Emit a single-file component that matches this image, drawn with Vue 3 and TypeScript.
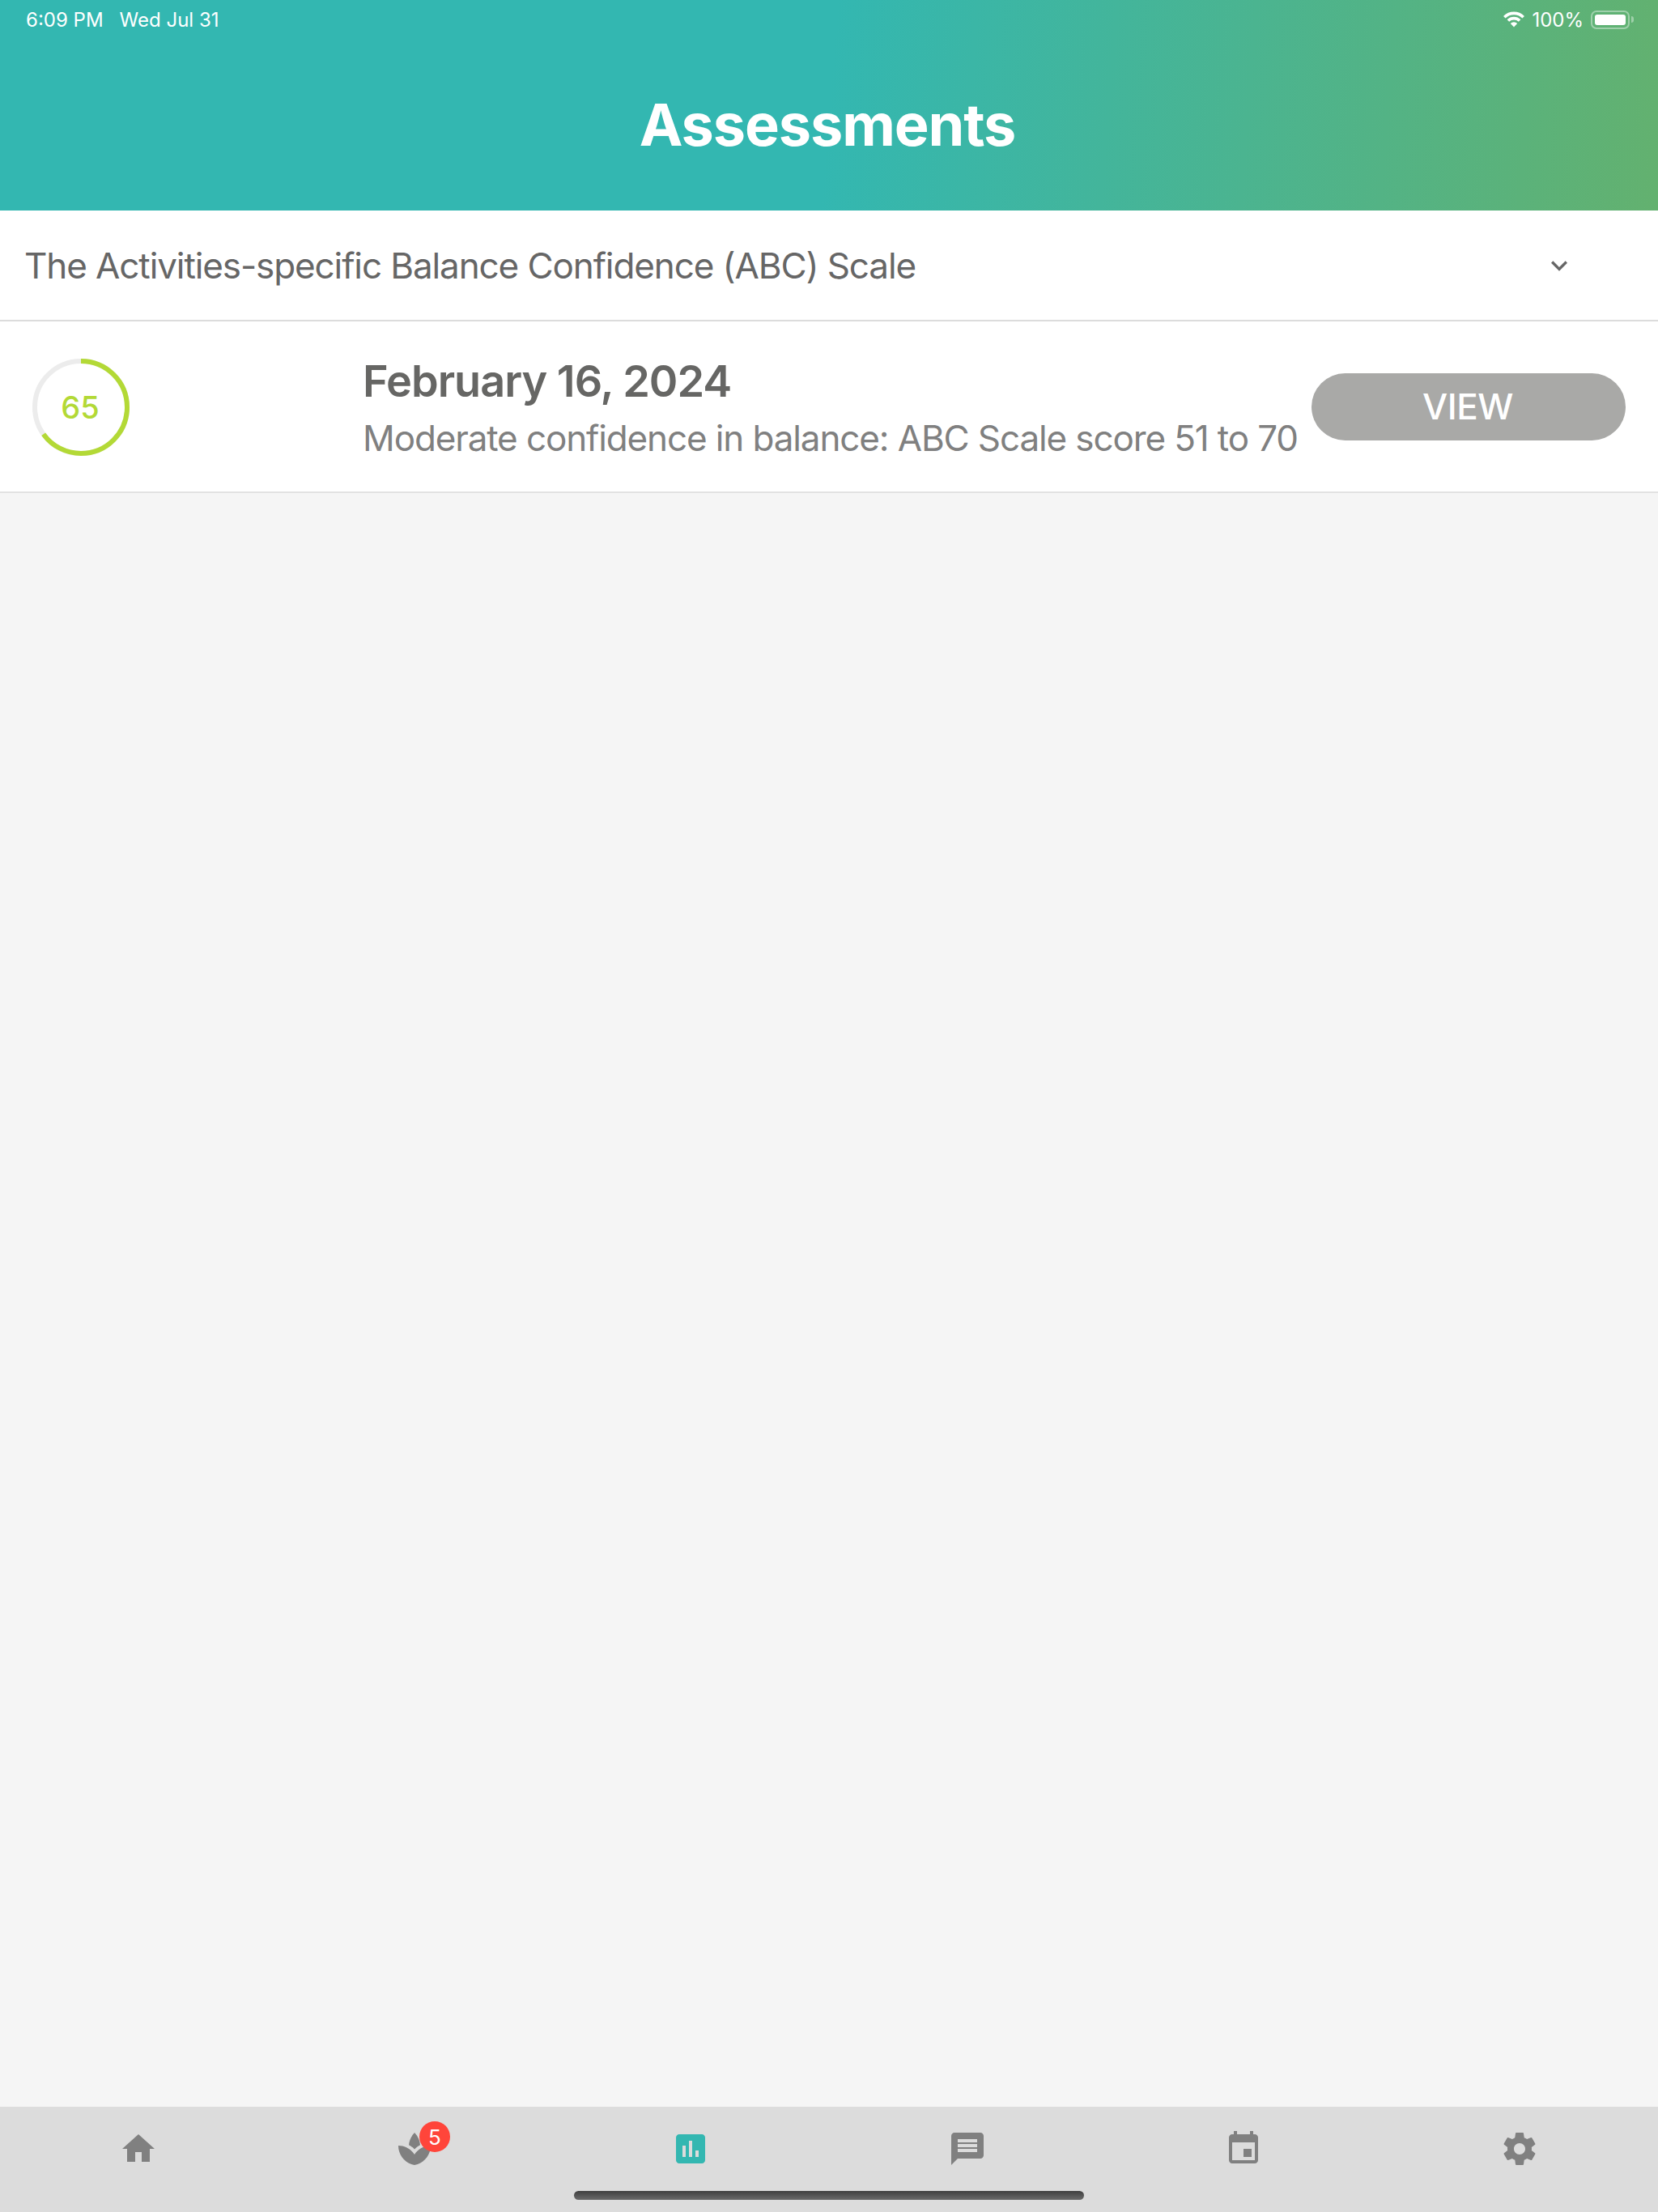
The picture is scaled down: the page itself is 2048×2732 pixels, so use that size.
<template>
  <div class="page">
    <header class="header">
      <div class="status">
        <div class="status-left">
          <span>6:09 PM</span>
          <span>Wed Jul 31</span>
        </div>
        <div class="status-right">
          <svg class="wifi" viewBox="0 0 28 20" width="28" height="20">
            <path class="wifi-arc" d="M2.300 7.200A16.500 16.500 0 0 1 25.700 7.200" />
            <path class="wifi-arc" d="M6.900 11.600A10 10 0 0 1 21.100 11.600" />
            <path fill="#fff" d="M14 19.500L9.800 15a6 6 0 0 1 8.400 0z" />
          </svg>
          <span>100%</span>
          <div class="battery"><div class="battery-fill"></div></div>
          <div class="battery-nub"></div>
        </div>
      </div>
      <h1 class="title">Assessments</h1>
    </header>

    <div class="picker">
      <span class="picker-label">The Activities-specific Balance Confidence (ABC) Scale</span>
      <svg class="chevron" viewBox="0 0 24 24" width="40" height="40">
        <path fill="#666" d="M16.590 8.590L12 13.170 7.410 8.590 6 10l6 6 6-6z" />
      </svg>
    </div>

    <main class="content">
      <div class="result">
        <div class="score">
          <svg viewBox="0 0 120 120" width="120" height="120">
            <circle class="ring-track" cx="60" cy="60" :r="radius" />
            <circle
              class="ring-value"
              cx="60"
              cy="60"
              :r="radius"
              :stroke-dasharray="dash"
              transform="rotate(-90 60 60)"
            />
          </svg>
          <span class="score-num">{{ score }}</span>
        </div>
        <div class="result-text">
          <div class="result-date">February 16, 2024</div>
          <div class="result-desc">Moderate confidence in balance: ABC Scale score 51 to 70</div>
        </div>
        <button class="view-btn">VIEW</button>
      </div>
    </main>

    <footer class="tabbar">
      <div class="tabs">
        <div v-for="tab in tabs" :key="tab.name" class="tab">
          <div class="tab-icon">
            <svg viewBox="0 0 24 24" width="48" height="48">
              <path :fill="tab.active ? '#33b7b1' : '#808080'" :d="tab.path" />
            </svg>
            <span v-if="tab.badge" class="badge">{{ tab.badge }}</span>
          </div>
        </div>
      </div>
      <div class="home-bar"></div>
    </footer>
  </div>
</template>

<script setup lang="ts">
import { computed } from "vue";

interface Tab {
  name: string;
  path: string;
  active?: boolean;
  badge?: number;
}

const score = 65;
const radius = 57;
const dash = computed(() => {
  const full = 2 * Math.PI * radius;
  return `${(full * score) / 100} ${full}`;
});

const tabs: Tab[] = [
  { name: "home", path: "M10 20v-6h4v6h5v-8h3L12 3 2 12h3v8z" },
  {
    name: "spa",
    badge: 5,
    path: "M15.490 9.630c-.18-2.790-1.310-5.510-3.430-7.630-2.140 2.140-3.320 4.860-3.550 7.630 1.280.68 2.460 1.560 3.490 2.630 1.030-1.060 2.210-1.940 3.490-2.630zM12 15.450C9.850 12.170 6.180 10 2 10c0 5.320 3.360 9.820 8.030 11.490.63.23 1.290.4 1.970.51.68-.12 1.330-.29 1.970-.51C18.640 19.820 22 15.320 22 10c-4.180 0-7.850 2.170-10 5.450z",
  },
  {
    name: "assessment",
    active: true,
    path: "M19 3H5c-1.100 0-2 .9-2 2v14c0 1.100.9 2 2 2h14c1.100 0 2-.9 2-2V5c0-1.100-.9-2-2-2zM9 17H7v-7h2v7zm4 0h-2V7h2v10zm4 0h-2v-4h2v4z",
  },
  {
    name: "message",
    path: "M20 2H4c-1.100 0-1.990.9-1.990 2L2 22l4-4h14c1.100 0 2-.9 2-2V4c0-1.100-.9-2-2-2zm-2 12H6v-2h12v2zm0-3H6V9h12v2zm0-3H6V6h12v2z",
  },
  {
    name: "event",
    path: "M17 12h-5v5h5v-5zM16 1v2H8V1H6v2H5c-1.110 0-1.990.9-1.990 2L3 19c0 1.100.89 2 2 2h14c1.100 0 2-.9 2-2V5c0-1.100-.9-2-2-2h-1V1h-2zm3 18H5V8h14v11z",
  },
  {
    name: "settings",
    path: "M19.430 12.980c.04-.32.07-.64.07-.98s-.03-.66-.07-.98l2.110-1.650c.19-.15.24-.42.12-.64l-2-3.460c-.12-.22-.39-.3-.61-.22l-2.490 1c-.52-.4-1.080-.73-1.690-.98l-.38-2.650C14.460 2.180 14.250 2 14 2h-4c-.25 0-.46.18-.49.42l-.38 2.650c-.61.25-1.170.59-1.690.98l-2.490-1c-.23-.09-.49 0-.61.22l-2 3.460c-.13.22-.07.49.12.64l2.110 1.650c-.04.32-.07.65-.07.98s.03.66.07.98l-2.110 1.650c-.19.15-.24.42-.12.64l2 3.460c.12.22.39.3.61.22l2.490-1c.52.4 1.080.73 1.690.98l.38 2.650c.03.24.24.42.49.42h4c.25 0 .46-.18.49-.42l.38-2.650c.61-.25 1.170-.59 1.690-.98l2.490 1c.23.09.49 0 .61-.22l2-3.460c.12-.22.07-.49-.12-.64l-2.110-1.650zM12 15.500c-1.930 0-3.500-1.570-3.500-3.500s1.570-3.500 3.500-3.500 3.500 1.570 3.500 3.500-1.570 3.500-3.500 3.500z",
  },
];
</script>

<style scoped>
.page {
  display: flex;
  flex-direction: column;
  width: 2048px;
  height: 2732px;
  background: #f5f5f5;
  font-family: Inter, "Liberation Sans", sans-serif;
}
.header {
  height: 260px;
  box-sizing: border-box;
  padding: 10px 30px 0;
  background: linear-gradient(95deg, #33b7b1 0%, #33b7b1 50%, #63b16f 100%);
  color: #fff;
}
.status {
  display: flex;
  justify-content: space-between;
  align-items: center;
  height: 28px;
  padding-left: 2px;
  font-size: 24px;
}
.status-left {
  display: flex;
  gap: 20px;
}
.status-right {
  display: flex;
  align-items: center;
}
.wifi {
  margin-right: 8px;
}
.wifi-arc {
  fill: none;
  stroke: #fff;
  stroke-width: 3.6;
}
.battery {
  width: 48px;
  height: 23px;
  box-sizing: border-box;
  margin-left: 9px;
  padding: 3px;
  border: 2px solid rgba(255, 255, 255, 0.4);
  border-radius: 7px;
}
.battery-fill {
  height: 100%;
  background: #fff;
  border-radius: 3px;
}
.battery-nub {
  width: 3px;
  height: 8px;
  margin-left: 2px;
  background: rgba(255, 255, 255, 0.4);
  border-radius: 0 3px 3px 0;
}
.title {
  margin: 74px 0 0;
  padding-right: 4px;
  font-size: 72px;
  line-height: 84px;
  font-weight: 700;
  letter-spacing: -1.1px;
  text-align: center;
}
.picker {
  display: flex;
  align-items: center;
  justify-content: space-between;
  height: 137px;
  box-sizing: border-box;
  padding: 0 102px 0 30px;
  background: #fff;
  border-bottom: 2px solid #dcdcdc;
}
.picker-label {
  font-size: 44px;
  letter-spacing: -1.1px;
  color: #666;
}
.content {
  flex: 1;
}
.result {
  display: flex;
  align-items: center;
  height: 212px;
  box-sizing: border-box;
  padding: 0 40px;
  background: #fff;
  border-bottom: 2px solid #e2e2e2;
}
.score {
  position: relative;
  width: 120px;
  height: 120px;
  margin: 2px 288px 0 0;
  flex-shrink: 0;
}
.score svg {
  display: block;
}
.ring-track,
.ring-value {
  fill: none;
  stroke-width: 6;
}
.ring-track {
  stroke: #ececec;
}
.ring-value {
  stroke: #b3d936;
}
.score-num {
  position: absolute;
  inset: 0;
  display: flex;
  align-items: center;
  justify-content: center;
  padding-right: 2px;
  font-size: 38px;
  font-weight: 500;
  color: #b3d936;
}
.result-text {
  flex: 1;
  min-width: 0;
  padding-top: 4px;
  white-space: nowrap;
}
.result-date {
  font-size: 54px;
  line-height: 62px;
  font-weight: 600;
  letter-spacing: -1px;
  color: #666664;
}
.result-desc {
  margin-top: 12px;
  font-size: 44px;
  line-height: 54px;
  letter-spacing: -1.12px;
  color: #808080;
}
.view-btn {
  width: 388px;
  height: 83px;
  padding: 0 2px 0 0;
  border: 0;
  border-radius: 42px;
  background: #a9a9a7;
  color: #fff;
  font-family: inherit;
  font-size: 44px;
  font-weight: 500;
  letter-spacing: -0.5px;
}
.tabbar {
  height: 130px;
  box-sizing: border-box;
  padding-top: 28px;
  background: #dcdcdc;
}
.tabs {
  display: flex;
}
.tab {
  flex: 1;
  display: flex;
  justify-content: center;
}
.tab-icon {
  position: relative;
  width: 48px;
  height: 48px;
}
.tab-icon svg {
  display: block;
}
.badge {
  position: absolute;
  top: -10px;
  left: 30px;
  display: flex;
  align-items: center;
  justify-content: center;
  width: 38px;
  height: 38px;
  border-radius: 50%;
  background: #ff453a;
  color: #fff;
  font-size: 26px;
}
.home-bar {
  width: 630px;
  height: 11px;
  margin: 28px auto 0;
  border-radius: 6px;
  background: linear-gradient(180deg, #3f3f3f, #6a6a6a);
}
</style>
